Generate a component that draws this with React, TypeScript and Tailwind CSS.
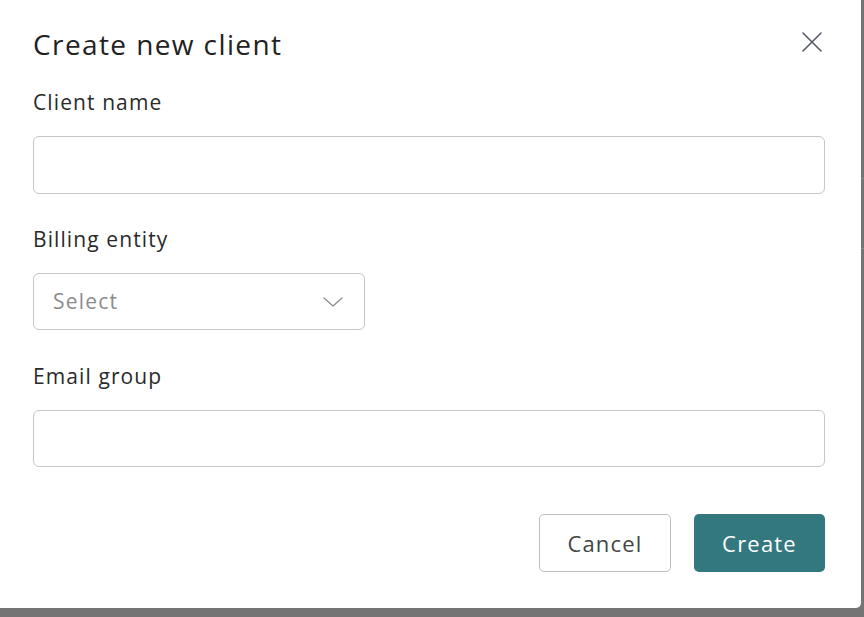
import React, { useState } from 'react';

const font = { fontFamily: '"Open Sans", Lato, sans-serif' };

const CloseIcon = () => (
  <svg width="20" height="20" viewBox="0 0 20 20" fill="none" stroke="#555a66" strokeWidth="1.6" strokeLinecap="round">
    <path d="M1 1L19 19M19 1L1 19" />
  </svg>
);

const Chevron = () => (
  <svg width="20" height="10" viewBox="0 0 20 10" fill="none" stroke="#8a8a8a" strokeWidth="1.2" strokeLinecap="round" strokeLinejoin="round">
    <path d="M1 1L10 9L19 1" />
  </svg>
);

export default function App() {
  const [name, setName] = useState('');
  const [email, setEmail] = useState('');

  return (
    <div className="relative w-full h-[617px] overflow-hidden bg-[#747474]" style={font}>
      {/* page behind the overlay */}
      <div className="flex flex-col pt-[178px]">
        <div className="h-px bg-[#8a8a8a]" />
        <div className="h-[69px]" />
        <div className="h-px bg-[#8a8a8a]" />
      </div>

      {/* Modal */}
      <div className="absolute left-0 top-0 w-[861px] h-[608px] bg-white rounded-br-[5px] flex flex-col pt-[27px] pl-[33px] pr-[36px]">
        <div className="flex items-start justify-between">
          <h2 className="text-[28px] leading-[34px] text-[#222] tracking-[1.4px]">Create new client</h2>
          <button className="mt-[5px] mr-[3px] cursor-pointer">
            <CloseIcon />
          </button>
        </div>

        <label className="mt-[29px] text-[21px] leading-[24px] text-[#2a2a2a] tracking-[1.1px]">Client name</label>
        <input
          value={name}
          onChange={(e) => setName(e.target.value)}
          className="mt-[22px] h-[58px] w-full rounded-[6px] border-[1.5px] border-[#c6c6c6] px-4 text-[20px] outline-none"
        />

        <label className="mt-[33px] text-[21px] leading-[24px] text-[#2a2a2a] tracking-[1.1px]">Billing entity</label>
        <div className="mt-[22px] h-[57px] w-[332px] rounded-[6px] border-[1.5px] border-[#c6c6c6] flex items-center justify-between pl-[19px] pr-[21px]">
          <span className="text-[21px] text-[#8c8c8c] tracking-[1.2px]">Select</span>
          <Chevron />
        </div>

        <label className="mt-[34px] text-[21px] leading-[24px] text-[#2a2a2a] tracking-[1.1px]">Email group</label>
        <input
          value={email}
          onChange={(e) => setEmail(e.target.value)}
          className="mt-[22px] h-[57px] w-full rounded-[6px] border-[1.5px] border-[#c6c6c6] px-4 text-[20px] outline-none"
        />

        <div className="mt-[47px] flex justify-end gap-[23px]">
          <button className="h-[58px] w-[132px] rounded-[5px] border border-[#bdbdbd] bg-white text-[22px] text-[#444] tracking-[1.2px] cursor-pointer">
            Cancel
          </button>
          <button className="h-[58px] w-[131px] rounded-[5px] bg-[#34787f] text-[22px] text-white tracking-[1.2px] cursor-pointer">
            Create
          </button>
        </div>
      </div>
    </div>
  );
}
